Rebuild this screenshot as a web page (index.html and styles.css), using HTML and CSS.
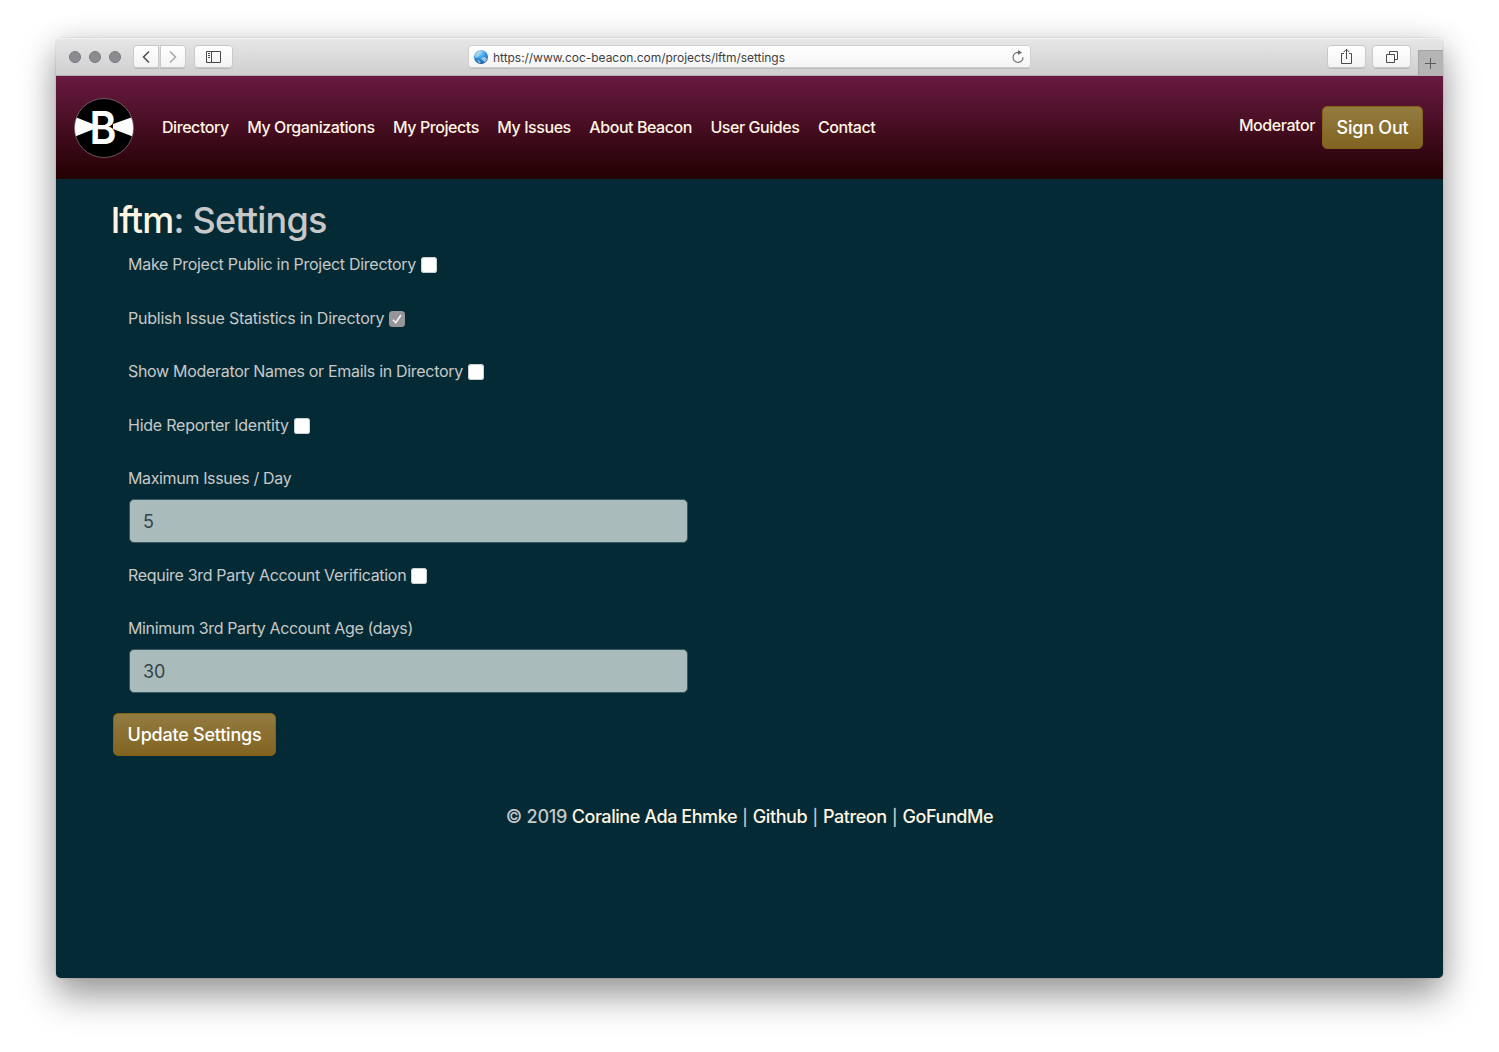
FILE: index.html
```html
<!DOCTYPE html>
<html lang="en">
<head>
<meta charset="utf-8">
<title>lftm: Settings</title>
<link rel="stylesheet" href="styles.css">
</head>
<body>
<div class="window">
  <div class="toolbar">
    <div class="lights"><i></i><i></i><i></i></div>
    <div class="tool-group">
      <span class="tool back"><svg width="26" height="22" viewBox="0 0 26 22"><path d="M16 5.500 10.500 11l5.500 5.500" fill="none" stroke="#4a4a4a" stroke-width="1.500"/></svg></span>
      <span class="tool forward"><svg width="26" height="22" viewBox="0 0 26 22"><path d="M10 5.500 15.500 11 10 16.500" fill="none" stroke="#a6a6a6" stroke-width="1.500"/></svg></span>
    </div>
    <span class="tool sidebar"><svg width="37" height="22" viewBox="0 0 37 22"><path d="M11.500 5.500h14v11h-14zM16.500 5.500v11M13 7.500h2M13 9.500h2M13 11.500h2" fill="none" stroke="#4a4a4a"/></svg></span>
    <div class="address">
      <svg class="globe" width="14" height="14" viewBox="0 0 14 14">
        <defs><radialGradient id="sea" cx=".4" cy=".15" r=".9"><stop offset="0" stop-color="#a5d8f8"/><stop offset=".5" stop-color="#3098ea"/><stop offset="1" stop-color="#164e98"/></radialGradient></defs>
        <circle cx="7" cy="7" r="7" fill="url(#sea)"/>
        <path d="M1 4 3 2.200 5.500 1.500 7 3 5 4.500 5.800 6 4 6.500 2.500 8 1 7zM7 8.500l2-1.500 3 .5 1 2-2 2.500-1.500-.5-1-1.500zM3 10l2 .5 2 2.500-2 0z" fill="#b4d4df" opacity=".8"/>
      </svg>
      <span class="url">https://www.coc-beacon.com/projects/lftm/settings</span>
      <svg class="reload" width="14" height="14" viewBox="0 0 14 14"><path d="M8.500 2.400H7A5 5 0 1 0 12 7.300" fill="none" stroke="#6c6c6c" stroke-width="1.100"/><path d="M7 0l4 2.500L7 5z" fill="#6c6c6c"/></svg>
    </div>
    <span class="tool share"><svg width="37" height="22" viewBox="0 0 37 22"><path d="M16 7.500h-2.500v10h10v-10H21M18.500 13V3.500M15.700 6l2.800-2.800L21.300 6" fill="none" stroke="#4a4a4a"/></svg></span>
    <span class="tool tabs"><svg width="37" height="22" viewBox="0 0 37 22"><path d="M13.500 8.500h8v8h-8zM16.500 8.500v-3h8v8h-3" fill="none" stroke="#4a4a4a"/></svg></span>
    <span class="new-tab"><svg width="25" height="25" viewBox="0 0 25 25"><path d="M7 13.500h11M12.500 8v11" stroke="#5b5b5b"/></svg></span>
  </div>

  <header class="site-header">
    <svg class="logo" width="60" height="60" viewBox="0 0 60 60">
      <defs><clipPath id="disc"><circle cx="30" cy="30" r="29.500"/></clipPath></defs>
      <circle cx="30" cy="30" r="29.500" fill="#000"/>
      <path d="M0 18.500 20 26.500V31L0 39zM60 18.500 39 26V31l21 8z" fill="#fff" clip-path="url(#disc)"/>
      <circle cx="30" cy="30" r="29.500" fill="none" stroke="#8b7780" stroke-width=".7"/>
      <text class="logo-letter" transform="translate(29 45.500) scale(.91 1)" text-anchor="middle">B</text>
    </svg>
    <nav class="nav">
      <a>Directory</a><a>My Organizations</a><a>My Projects</a><a>My Issues</a><a>About Beacon</a><a>User Guides</a><a>Contact</a>
    </nav>
    <a class="account">Moderator</a>
    <button class="button sign-out">Sign Out</button>
  </header>

  <main class="content">
    <h1 class="title"><a>lftm</a>: Settings</h1>
    <form class="settings">
      <label class="row"><span>Make Project Public in Project Directory</span><i class="check"></i></label>
      <label class="row loose"><span>Publish Issue Statistics in Directory</span><i class="check checked"><svg width="16" height="16" viewBox="0 0 16 16"><path d="m4 8.800 2.800 3L12 4" fill="none" stroke="#f4f4f4" stroke-width="1.600"/></svg></i></label>
      <label class="row snug"><span>Show Moderator Names or Emails in Directory</span><i class="check"></i></label>
      <label class="row loose"><span>Hide Reporter Identity</span><i class="check"></i></label>
      <label class="field"><span>Maximum Issues / Day</span><input class="input" type="text" value="5"></label>
      <label class="row snug"><span>Require 3rd Party Account Verification</span><i class="check"></i></label>
      <label class="field"><span>Minimum 3rd Party Account Age (days)</span><input class="input" type="text" value="30"></label>
    </form>
    <button class="button update">Update Settings</button>
  </main>

  <footer class="footer">© 2019 <a>Coraline Ada Ehmke</a> <i class="bar">|</i> <a>Github</a> <i class="bar">|</i> <a>Patreon</a> <i class="bar">|</i> <a>GoFundMe</a></footer>
</div>
</body>
</html>
```
FILE: styles.css
```css
* { box-sizing: border-box; }
body {
  margin: 0;
  height: 1052px;
  padding: 38px 56px 74px;
  overflow: hidden;
  background: #fff;
  font-family: Inter, "Liberation Sans", sans-serif;
  font-size: 16px;
  color: #c8c8c8;
}
svg { display: block; }
.window {
  height: 940px;
  border-radius: 6px 6px 5px 5px;
  background: #042b35;
  box-shadow: 0 0 1px rgba(0,0,0,.55), 0 18px 36px rgba(0,0,0,.38), 0 0 30px rgba(0,0,0,.1);
}
.toolbar {
  display: flex;
  height: 38px;
  padding: 7px 0 0 13px;
  border-radius: 5px 5px 0 0;
  background: linear-gradient(#e7e7e7, #cfcfcf);
  border-bottom: 1px solid #b3aeb1;
  box-shadow: inset 0 1px #f3f3f3;
}
.lights { display: flex; gap: 8px; margin-top: 6px; width: 64px; }
.lights i { width: 12px; height: 12px; border-radius: 50%; background: #8d8b90; border: 1px solid #79777c; }
.tool-group { display: flex; gap: 1px; }
.tool {
  height: 23px;
  padding: 1px 0;
  border-radius: 4px;
  background: linear-gradient(#fff, #f3f3f3);
  box-shadow: inset 0 0 0 1px #c9c9c9, 0 1px #b9b9b9;
}
.back { border-radius: 4px 0 0 4px; }
.forward { border-radius: 0 4px 4px 0; }
.sidebar { margin-left: 8px; padding: 1px; width: 39px; }
.address {
  display: flex;
  align-items: center;
  width: 563px;
  height: 23px;
  margin-left: 235px;
  padding: 0 6px 0 6px;
  border-radius: 4px;
  background: linear-gradient(#fff, #f5f5f5);
  box-shadow: inset 0 0 0 1px #d0d0d0, 0 1px #b9b9b9;
}
.url { margin-left: 5px; padding-top: 1px; font-size: 12px; letter-spacing: -.04px; color: #3f3f3f; }
.reload { margin-left: auto; }
.share { margin-left: 296px; padding: 1px; width: 39px; }
.tabs { margin-left: 6px; padding: 1px; width: 39px; }
.new-tab { margin: 5px 0 0 auto; width: 25px; height: 25px; background: #b5b5b5; box-shadow: inset 1px 1px #a5a5a5; }
.site-header {
  display: flex;
  align-items: center;
  height: 103px;
  padding: 0 20px 0 18px;
  background: linear-gradient(#691a41, #220002);
  color: #fff5e1;
}
.logo-letter { font: 600 45px Inter, sans-serif; fill: #fff; }
.nav { display: flex; gap: 18.500px; margin: -2px 0 0 28px; font-weight: 500; letter-spacing: -.44px; white-space: nowrap; }
.account { margin: -6px 7px 0 auto; font-weight: 500; letter-spacing: -.42px; }
.button {
  height: 43px;
  padding: 0;
  border: 1px solid #816218;
  border-radius: 5px;
  background: linear-gradient(#937b40, #816422);
  color: #fff;
  font: 500 18px Inter, sans-serif;
  letter-spacing: -.23px;
}
.sign-out { width: 101px; }
.content { padding: 18px 55px 0; }
.title { margin: 0; font-size: 36px; line-height: 46px; font-weight: 500; letter-spacing: -.78px; }
.title a { color: #fff5e1; }
.settings { width: 577px; padding: 9px 0 0 17px; }
.row, .field { line-height: 24px; white-space: nowrap; }
.row { display: flex; align-items: center; height: 24px; margin-bottom: 29.500px; letter-spacing: -.28px; }
.snug { letter-spacing: -.31px; }
.loose { letter-spacing: -.23px; }
.check { width: 16px; height: 16px; margin: 2px 0 0 5px; border-radius: 3.500px; background: #fff; box-shadow: inset 0 0 0 1px #c9cfd0; }
.checked { background: #95959a; box-shadow: none; }
.field { display: block; height: 96.500px; letter-spacing: -.36px; }
.input {
  display: block;
  width: 559px;
  height: 44px;
  margin: 9px 0 0 1px;
  padding: 0 13px;
  border: 1px solid #375860;
  border-radius: 5px;
  background: #a9bcbb;
  font: 18px Inter, sans-serif;
  color: #364347;
}
.update { display: block; width: 163px; margin: 0 0 0 2px; }
.footer { margin-top: 49px; text-align: center; font-size: 18px; font-weight: 500; line-height: 24px; letter-spacing: -.25px; }
.footer a { color: #fff5e1; letter-spacing: -.43px; }
.bar { margin: 0 .7px; font-style: normal; font-size: 16px; }
```
